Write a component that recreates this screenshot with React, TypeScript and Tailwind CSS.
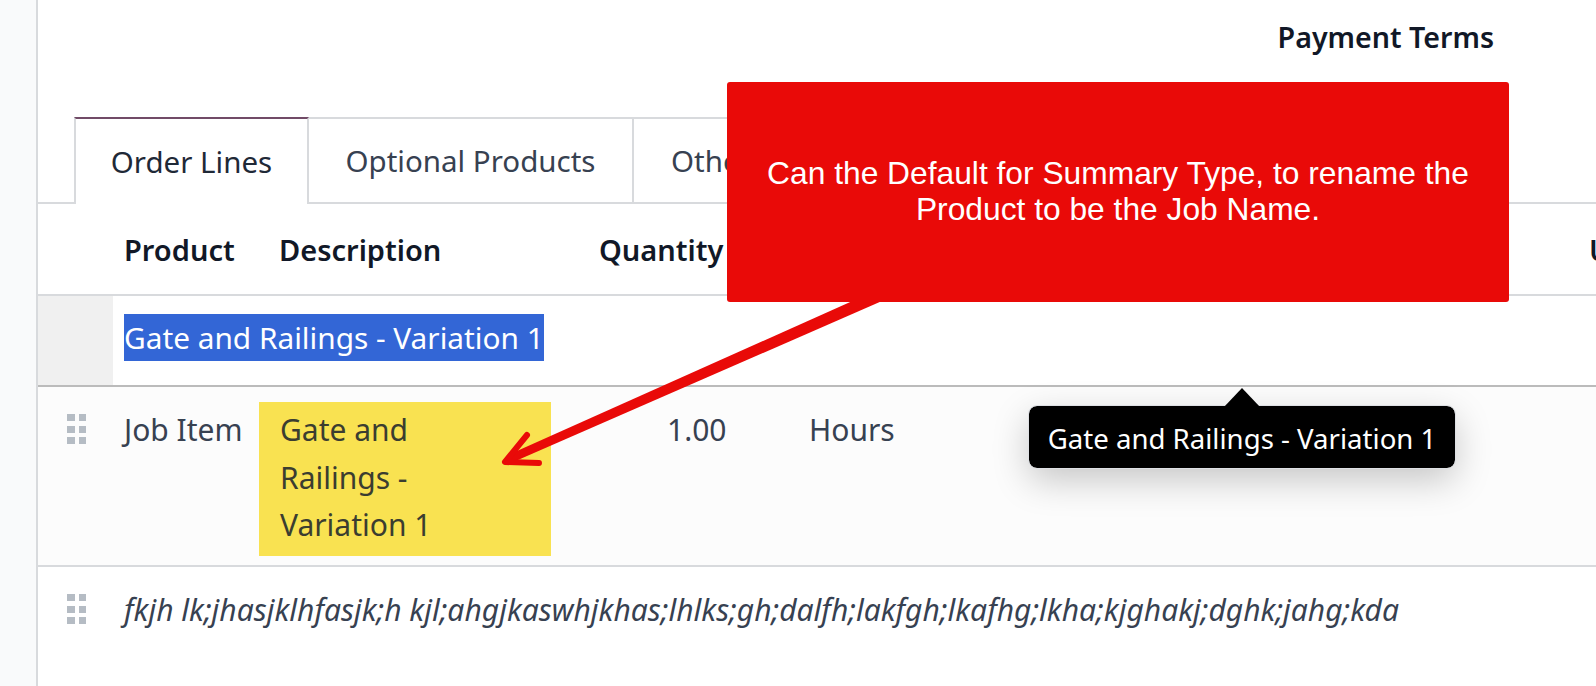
const font = { fontFamily: '"Noto Sans", sans-serif' };

function DragHandle() {
  return (
    <div className="grid w-[19px] grid-cols-2 gap-x-[4px] gap-y-[4.5px]">
      {[0, 1, 2, 3, 4, 5].map(i => (
        <span key={i} className="h-[7px] w-[7.5px] bg-[#b5bcc4]"></span>
      ))}
    </div>
  );
}

export default function App() {
  return (
    <div className="relative h-[686px] w-[1596px] overflow-hidden bg-white text-[30px] text-[#374151]" style={font}>
      <div className="flex h-full">
        <div className="w-[38px] shrink-0 border-r-2 border-[#d8dadd] bg-[#f9fafb]"></div>
        <div className="min-w-0 flex-1">
          <div className="h-[117px] pr-[102px] pt-[17px] text-right text-[28.6px] font-semibold leading-[40px] text-[#111827]">Payment Terms</div>

          <div className="flex h-[87px] border-b-2 border-[#d8dadd] pl-[36px] text-[29.5px]">
            <div className="-mb-[2px] flex h-[87px] w-[235px] items-center justify-center border-x-2 border-t-2 border-[#d8dadd] border-t-[#714b67] bg-white pt-[2px] text-[#1f2937]">Order Lines</div>
            <div className="flex w-[325px] items-center justify-center border-r-2 border-t-2 border-[#d8dadd] pt-[2px]">Optional Products</div>
            <div className="flex items-center border-r-2 border-t-2 border-[#d8dadd] px-[37px] pt-[2px]">Other Info</div>
          </div>

          <div className="flex h-[92px] items-center whitespace-nowrap border-b-2 border-[#d8dadd] pt-[2px] text-[29px] font-semibold text-[#111827]">
            <span className="ml-[86px] w-[155px] shrink-0">Product</span>
            <span className="w-[320px] shrink-0">Description</span>
            <span className="w-[990px] shrink-0">Quantity</span>
            <span className="shrink-0">Unit</span>
          </div>

          <div className="flex h-[91px] border-b-2 border-[#bbbbbb]">
            <div className="w-[75px] bg-[#f0f0f0]"></div>
            <div className="pl-[11px] pt-[18px]">
              <span className="block h-[47px] w-[420px] whitespace-nowrap bg-[#3366d6] text-[29.8px] leading-[47px] text-white">Gate and Railings - Variation 1</span>
            </div>
          </div>

          <div className="flex h-[180px] border-b-2 border-[#d8dadd] bg-[#fcfcfc] pt-[15px]">
            <div className="ml-[29px] w-[57px] pt-[12px]"><DragHandle /></div>
            <span className="mt-[4px] w-[135px] leading-[47.5px]">Job Item</span>
            <div className="h-[154px] w-[292px] bg-[#f9e251] px-[21px] pt-[4px] leading-[47.5px] text-[#3b3d30]">Gate and<br />Railings -<br />Variation 1</div>
            <span className="ml-[116px] mt-[4px] w-[142px] leading-[47.5px]">1.00</span>
            <span className="mt-[4px] leading-[47.5px]">Hours</span>
          </div>

          <div className="flex pt-[27px]">
            <div className="ml-[29px] w-[57px]"><DragHandle /></div>
            <span className="-mt-[8px] whitespace-nowrap italic leading-[47.5px]">fkjh lk;jhasjklhfasjk;h kjl;ahgjkaswhjkhas;lhlks;gh;dalfh;lakfgh;lkafhg;lkha;kjghakj;dghk;jahg;kda</span>
          </div>
        </div>
      </div>

      <div className="absolute left-[1029px] top-[406px] h-[62px] w-[426px] rounded-[8px] bg-black text-center text-[27.6px] leading-[64px] text-white shadow-[0_12px_36px_rgba(0,0,0,0.22)] outline-[1.5px] outline-[#dee0e4]">Gate and Railings - Variation 1</div>
      <svg className="absolute left-[1222px] top-[387px]" width="40" height="20" viewBox="0 0 40 20">
        <path d="M2 20 L20 1 L38 20 Z" fill="#000" />
      </svg>

      <svg className="absolute left-0 top-0" width="1596" height="686" viewBox="0 0 1596 686">
        <path d="M882 301 L877 290 L508 455 L511 463 Z" fill="#e90a08" />
        <path d="M527 435 L505 462 L539 463" stroke="#e90a08" strokeWidth="6" fill="none" strokeLinecap="round" strokeLinejoin="round" />
      </svg>
      <div className="absolute left-[727px] top-[82px] flex h-[220px] w-[782px] items-center justify-center rounded-[3px] bg-[#e90a08] pb-[2px] text-center text-[31.75px] leading-[36px] text-white" style={{ fontFamily: '"Liberation Sans", sans-serif' }}>
        <p>Can the Default for Summary Type, to rename the<br />Product to be the Job Name.</p>
      </div>
    </div>
  );
}
